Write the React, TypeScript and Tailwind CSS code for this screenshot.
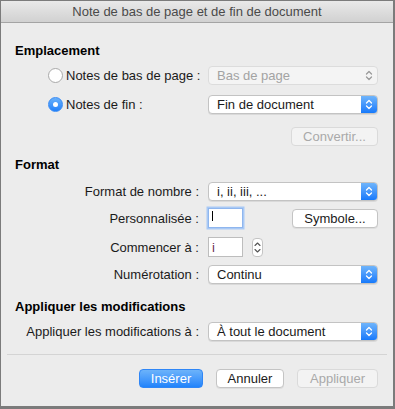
import React from "react";

const font = { fontFamily: '"Liberation Sans", Arial, sans-serif' };

function Chevrons({ color }: { color: string }) {
  return (
    <svg width="16" height="19" viewBox="0 0 16 19">
      <path d="M5.5 8 L8 5.5 L10.5 8" fill="none" stroke={color} strokeWidth="1.3" strokeLinecap="round" strokeLinejoin="round" />
      <path d="M5.5 11 L8 13.5 L10.5 11" fill="none" stroke={color} strokeWidth="1.3" strokeLinecap="round" strokeLinejoin="round" />
    </svg>
  );
}

function Popup({ text, disabled }: { text: string; disabled?: boolean }) {
  if (disabled) {
    return (
      <div className="flex h-[19px] w-[170px] items-center rounded-[4px] border border-[#dcdcdc] bg-[#f4f4f4]">
        <span className="flex-1 whitespace-nowrap pl-[8px] text-[13px] leading-none text-[#a3a3a3]">{text}</span>
        <div className="flex w-[16px] items-center justify-center">
          <Chevrons color="#9a9a9a" />
        </div>
      </div>
    );
  }
  return (
    <div className="flex h-[19px] w-[170px] items-stretch overflow-hidden rounded-[4px] border border-[#c3c3c3] bg-white shadow-[0_1px_0_rgba(0,0,0,0.08)]">
      <span className="flex flex-1 items-center whitespace-nowrap pl-[8px] text-[13px] leading-none text-[#1a1a1a]">{text}</span>
      <div className="flex w-[16px] items-center justify-center bg-gradient-to-b from-[#6eb4fb] to-[#1479fb]">
        <Chevrons color="#ffffff" />
      </div>
    </div>
  );
}

function Button({ text, w, kind }: { text: string; w: string; kind: "primary" | "normal" | "disabled" }) {
  const base = "flex h-[19px] items-center justify-center whitespace-nowrap rounded-[4px] text-[13px] leading-none ";
  if (kind === "primary")
    return (
      <div className={base + w + " border border-[#2f86f6] bg-gradient-to-b from-[#6cb3fa] to-[#1f83fb] text-white"}>{text}</div>
    );
  if (kind === "disabled")
    return <div className={base + w + " border border-[#dadada] bg-[#f3f3f3] text-[#a9a9a9]"}>{text}</div>;
  return (
    <div className={base + w + " border border-[#c4c4c4] bg-white text-[#1a1a1a] shadow-[0_1px_0_rgba(0,0,0,0.06)]"}>{text}</div>
  );
}

function Label({ children }: { children: React.ReactNode }) {
  return <div className="w-[198px] shrink-0 whitespace-nowrap text-right text-[13px] leading-none text-[#1a1a1a]">{children}</div>;
}

export default function App() {
  return (
    <div className="h-[409px] w-[395px] bg-[#7b7b7b] pl-[1px] pt-[1px]" style={font}>
      <div className="flex h-[405px] w-[392px] flex-col bg-[#ececec]">
        <div className="flex h-[22px] shrink-0 items-center justify-center border-b border-[#a4a4a4] bg-gradient-to-b from-[#e9e9e9] to-[#d1d1d1] text-[13px] text-[#4a4a4a]">
          Note de bas de page et de fin de document
        </div>

        <div className="mt-[20px] h-[16px] pl-[14px] text-[13px] font-bold leading-[16px] text-black">Emplacement</div>

        <div className="mt-[7px] flex h-[19px] w-[377px] items-center">
          <div className="flex w-[198px] shrink-0 items-center pl-[47px]">
            <div className="h-[15px] w-[15px] shrink-0 rounded-full border border-[#a9a9a9] bg-white" />
            <span className="ml-[3px] whitespace-nowrap text-[13px] leading-none text-[#1a1a1a]">Notes de bas de page :</span>
          </div>
          <div className="ml-[9px]">
            <Popup text="Bas de page" disabled />
          </div>
        </div>

        <div className="mt-[10px] flex h-[19px] w-[377px] items-center">
          <div className="flex w-[198px] shrink-0 items-center pl-[47px]">
            <div className="flex h-[15px] w-[15px] shrink-0 items-center justify-center rounded-full border border-[#3a8cf5] bg-gradient-to-b from-[#68b0fa] to-[#1f80fa]">
              <div className="h-[5px] w-[5px] rounded-full bg-white" />
            </div>
            <span className="ml-[3px] whitespace-nowrap text-[13px] leading-none text-[#1a1a1a]">Notes de fin :</span>
          </div>
          <div className="ml-[9px]">
            <Popup text="Fin de document" />
          </div>
        </div>

        <div className="mt-[13px] flex w-[377px] justify-end">
          <Button text="Convertir..." w="w-[87px]" kind="disabled" />
        </div>

        <div className="mt-[11px] h-[16px] pl-[14px] text-[13px] font-bold leading-[16px] text-black">Format</div>

        <div className="mt-[9px] flex h-[19px] w-[377px] items-center">
          <Label>Format de nombre :</Label>
          <div className="ml-[9px]">
            <Popup text="i, ii, iii, ..." />
          </div>
        </div>

        <div className="mt-[7px] flex h-[20px] w-[377px] items-center">
          <Label>Personnalisée :</Label>
          <div className="relative ml-[9px] h-[20px] w-[35px] border border-[#8fb6ee] bg-white shadow-[0_0_0_1.5px_#a9c9f5]">
            <div className="absolute left-[3px] top-[2px] h-[10px] w-[1px] bg-black" />
          </div>
          <div className="ml-auto">
            <Button text="Symbole..." w="w-[86px]" kind="normal" />
          </div>
        </div>

        <div className="mt-[9px] flex h-[20px] w-[377px] items-center">
          <Label>Commencer à :</Label>
          <div className="ml-[9px] flex h-[20px] w-[35px] items-center border border-[#bdbdbd] bg-white pl-[3px] text-[13px] leading-none text-[#6e2e4e]">
            i
          </div>
          <div className="ml-[9px] flex h-[19px] w-[11px] items-center justify-center rounded-[4px] border border-[#c4c4c4] bg-white">
            <svg width="9" height="17" viewBox="0 0 9 17">
              <path d="M2 6.5 L4.5 4 L7 6.5" fill="none" stroke="#555" strokeWidth="1.1" strokeLinecap="round" strokeLinejoin="round" />
              <path d="M2 10.5 L4.5 13 L7 10.5" fill="none" stroke="#555" strokeWidth="1.1" strokeLinecap="round" strokeLinejoin="round" />
            </svg>
          </div>
        </div>

        <div className="mt-[8px] flex h-[19px] w-[377px] items-center">
          <Label>Numérotation :</Label>
          <div className="ml-[9px]">
            <Popup text="Continu" />
          </div>
        </div>

        <div className="mt-[15px] h-[16px] pl-[14px] text-[13px] font-bold leading-[16px] text-black">
          Appliquer les modifications
        </div>

        <div className="mt-[7px] flex h-[19px] w-[377px] items-center">
          <Label>Appliquer les modifications à :</Label>
          <div className="ml-[9px]">
            <Popup text="À tout le document" />
          </div>
        </div>

        <div className="ml-[6px] mt-[13px] h-[1px] w-[380px] bg-[#d4d4d4]" />

        <div className="mt-[14px] flex w-[377px] justify-end gap-[13px]">
          <Button text="Insérer" w="w-[64px]" kind="primary" />
          <Button text="Annuler" w="w-[68px]" kind="normal" />
          <Button text="Appliquer" w="w-[81px]" kind="disabled" />
        </div>
      </div>
    </div>
  );
}
